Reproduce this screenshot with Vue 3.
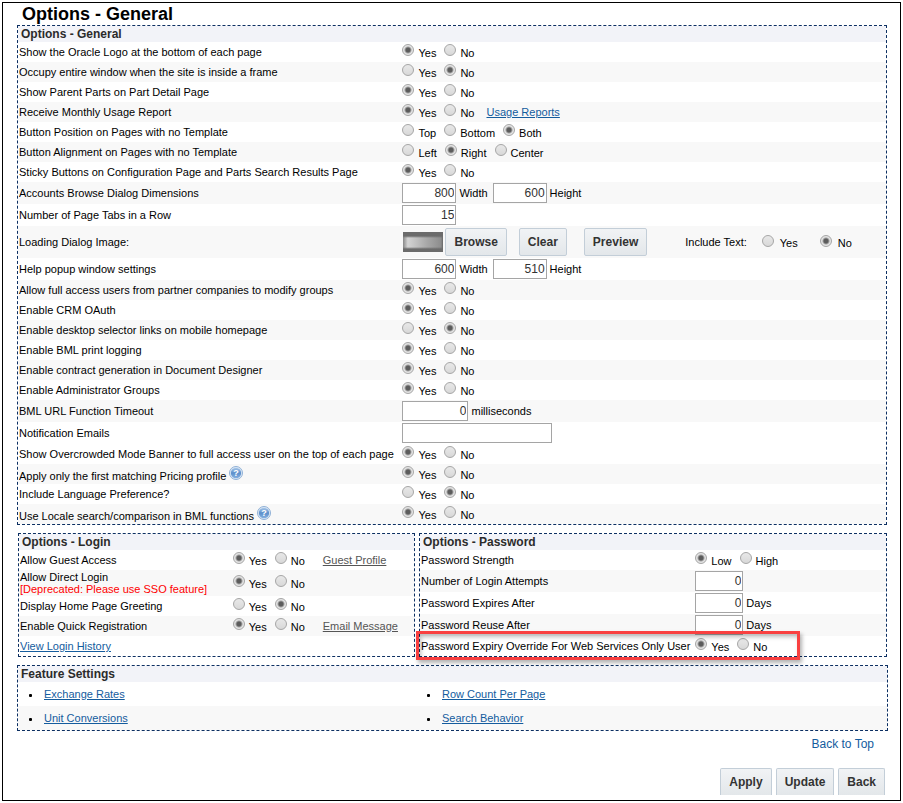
<script setup>
import { reactive } from 'vue'

const choice = (id, label, value, options = ['Yes', 'No'], extra = {}) => ({
  id, label, kind: 'choice', value, options, ...extra,
})
const fields = (id, label, inputs) => ({ id, label, kind: 'fields', inputs })

const panels = reactive([
  {
    id: 'general',
    title: 'Options - General',
    rows: [
      choice('logo', 'Show the Oracle Logo at the bottom of each page', 'Yes'),
      choice('frame', 'Occupy entire window when the site is inside a frame', 'No'),
      choice('parent', 'Show Parent Parts on Part Detail Page', 'Yes'),
      choice('usage', 'Receive Monthly Usage Report', 'Yes', undefined, { link: 'Usage Reports' }),
      choice('position', 'Button Position on Pages with no Template', 'Both', ['Top', 'Bottom', 'Both']),
      choice('alignment', 'Button Alignment on Pages with no Template', 'Right', ['Left', 'Right', 'Center']),
      choice('sticky', 'Sticky Buttons on Configuration Page and Parts Search Results Page', 'Yes'),
      fields('accounts', 'Accounts Browse Dialog Dimensions', [
        { value: '800', unit: 'Width', size: 'medium' },
        { value: '600', unit: 'Height', size: 'medium' },
      ]),
      fields('tabs', 'Number of Page Tabs in a Row', [{ value: '15', size: 'medium' }]),
      { id: 'loading', label: 'Loading Dialog Image:', kind: 'image', value: 'No', options: ['Yes', 'No'] },
      fields('help', 'Help popup window settings', [
        { value: '600', unit: 'Width', size: 'medium' },
        { value: '510', unit: 'Height', size: 'medium' },
      ]),
      choice('partner', 'Allow full access users from partner companies to modify groups', 'Yes'),
      choice('oauth', 'Enable CRM OAuth', 'Yes'),
      choice('desktop', 'Enable desktop selector links on mobile homepage', 'No'),
      choice('print', 'Enable BML print logging', 'Yes'),
      choice('contract', 'Enable contract generation in Document Designer', 'Yes'),
      choice('admin', 'Enable Administrator Groups', 'Yes'),
      fields('timeout', 'BML URL Function Timeout', [{ value: '0', unit: 'milliseconds', size: 'large' }]),
      fields('emails', 'Notification Emails', [{ value: '', size: 'wide' }]),
      choice('banner', 'Show Overcrowded Mode Banner to full access user on the top of each page', 'Yes'),
      choice('pricing', 'Apply only the first matching Pricing profile', 'Yes', undefined, { help: true }),
      choice('language', 'Include Language Preference?', 'No'),
      choice('locale', 'Use Locale search/comparison in BML functions', 'Yes', undefined, { help: true }),
    ],
  },
  {
    id: 'login',
    title: 'Options - Login',
    rows: [
      choice('guest', 'Allow Guest Access', 'Yes', undefined, { link: 'Guest Profile' }),
      choice('direct', 'Allow Direct Login', 'Yes', undefined, { note: '[Deprecated: Please use SSO feature]' }),
      choice('greeting', 'Display Home Page Greeting', 'No'),
      choice('registration', 'Enable Quick Registration', 'Yes', undefined, { link: 'Email Message' }),
      { id: 'history', kind: 'link', link: 'View Login History' },
    ],
  },
  {
    id: 'password',
    title: 'Options - Password',
    rows: [
      choice('strength', 'Password Strength', 'Low', ['Low', 'High']),
      fields('attempts', 'Number of Login Attempts', [{ value: '0', size: 'small' }]),
      fields('expires', 'Password Expires After', [{ value: '0', unit: 'Days', size: 'small' }]),
      fields('reuse', 'Password Reuse After', [{ value: '0', unit: 'Days', size: 'small' }]),
      choice('override', 'Password Expiry Override For Web Services Only User', 'Yes', undefined, { highlight: true }),
    ],
  },
])

const features = ['Exchange Rates', 'Row Count Per Page', 'Unit Conversions', 'Search Behavior']
</script>

<template>
  <main class="page">
    <h1 class="title">Options - General</h1>

    <div class="panels">
      <section v-for="panel in panels" :key="panel.id" class="panel" :class="panel.id">
        <h2 class="panel-title">{{ panel.title }}</h2>
        <div
          v-for="row in panel.rows"
          :key="row.id"
          class="row"
          :class="[row.kind, { highlight: row.highlight }]"
        >
          <a v-if="row.kind === 'link'" href="#" class="link">{{ row.link }}</a>
          <template v-else>
            <div class="label" :class="{ 'with-help': row.help }">
              <label v-if="row.kind === 'fields'" :for="`${row.id}-0`">{{ row.label }}</label>
              <span v-else :id="`${row.id}-label`">{{ row.label }}</span>
              <span v-if="row.note" class="note">{{ row.note }}</span>
              <svg v-if="row.help" class="help-icon" viewBox="0 0 14 14" aria-hidden="true">
                <defs>
                  <linearGradient :id="`${row.id}-ball`" x1="0" y1="0" x2="0" y2="1">
                    <stop offset="0" stop-color="#a9c8ea" />
                    <stop offset="0.5" stop-color="#5c8fcb" />
                    <stop offset="1" stop-color="#86b0e0" />
                  </linearGradient>
                </defs>
                <circle cx="7" cy="7" r="6.5" fill="#dfeaf6" stroke="#8fb0d6" />
                <circle cx="7" cy="7" r="5.2" :fill="`url(#${row.id}-ball)`" />
                <text x="7" y="10.2" text-anchor="middle" font-size="9" font-weight="bold" fill="#fff">?</text>
              </svg>
            </div>

            <div v-if="row.kind === 'choice'" class="controls">
              <div class="options" role="radiogroup" :aria-labelledby="`${row.id}-label`">
                <label v-for="option in row.options" :key="option" class="option">
                  <input v-model="row.value" type="radio" :name="row.id" :value="option" />
                  <span>{{ option }}</span>
                </label>
              </div>
              <a v-if="row.link" href="#" class="link">{{ row.link }}</a>
            </div>

            <div v-else-if="row.kind === 'fields'" class="controls">
              <span v-for="(input, i) in row.inputs" :key="i" class="field">
                <input :id="`${row.id}-${i}`" v-model="input.value" type="text" :class="input.size" :aria-label="`${row.label} ${input.unit || ''}`" />
                <label v-if="input.unit" :for="`${row.id}-${i}`">{{ input.unit }}</label>
              </span>
            </div>

            <div v-else class="controls">
              <span class="thumb"></span>
              <button type="button" class="button browse">Browse</button>
              <button type="button" class="button clear">Clear</button>
              <button type="button" class="button">Preview</button>
              <span id="include-label" class="include">Include Text:</span>
              <div class="options spread" role="radiogroup" aria-labelledby="include-label">
                <label v-for="option in row.options" :key="option" class="option">
                  <input v-model="row.value" type="radio" :name="row.id" :value="option" />
                  <span>{{ option }}</span>
                </label>
              </div>
            </div>
          </template>
        </div>
      </section>
    </div>

    <section class="panel features">
      <h2 class="panel-title">Feature Settings</h2>
      <ul class="feature-list">
        <li v-for="feature in features" :key="feature"><a href="#" class="link">{{ feature }}</a></li>
      </ul>
    </section>

    <footer class="footer">
      <a href="#" class="top-link">Back to Top</a>
      <div class="actions">
        <button type="button" class="button">Apply</button>
        <button type="button" class="button">Update</button>
        <button type="button" class="button">Back</button>
      </div>
    </footer>
  </main>
</template>

<style>
body {
  background: #fff;
}
#app {
  padding: 2px;
}
</style>

<style scoped>
.page {
  border: 1px solid #000;
  padding: 0 12px 5px 14px;
  font: 11px/14px "Liberation Sans", Arial, sans-serif;
  color: #000;
}
.title {
  margin: 0;
  padding-left: 5px;
  font-size: 18px;
  line-height: 22px;
}
.panels {
  display: grid;
  grid-template-columns: 398fr 468fr;
  gap: 8px 4px;
  margin: 0 1px 8px 0;
}
.panel {
  border: 1px dashed #0c2f62;
}
.general {
  grid-column: 1 / -1;
  --label-width: 44%;
}
.login {
  margin-left: 1px;
  --label-width: 54%;
}
.password {
  --label-width: 59%;
}
.panel-title {
  margin: 0;
  padding-left: 3px;
  background: #f2f3f8;
  color: #2b2b2b;
  font-size: 12px;
  line-height: 16px;
}
.row {
  position: relative;
  display: flex;
  align-items: center;
  min-height: 20px;
  padding-left: 1px;
}
.row:nth-child(odd) {
  background: #f8f8f8;
}
/* The banner row restarts the striping of the general panel. */
.general .row:nth-child(n + 21):nth-child(odd) {
  background: #fff;
}
.general .row:nth-child(n + 21):nth-child(even) {
  background: #f8f8f8;
}
.row.fields {
  min-height: 22px;
}
.row.image {
  min-height: 32px;
}
.label {
  flex: 0 0 var(--label-width);
  line-height: 12px;
}
.note {
  display: block;
  color: #f00;
}
.row:has(.note) {
  min-height: 26px;
}
.with-help {
  display: flex;
  align-items: flex-end;
  gap: 3px;
}
.help-icon {
  width: 14px;
  height: 14px;
  margin-bottom: 2px;
}
.controls {
  display: flex;
  align-items: center;
  gap: 5px;
  white-space: nowrap;
}
.general .controls {
  padding-left: 2px;
}
.options {
  display: flex;
  gap: 8px;
}
.option {
  display: flex;
  align-items: flex-start;
  gap: 4px;
}
.option span {
  padding-top: 2px;
}
input[type="radio"] {
  appearance: none;
  box-sizing: border-box;
  width: 12px;
  height: 12px;
  margin: 0;
  border: 1px solid #a6a6a6;
  border-radius: 50%;
  background: linear-gradient(#e8e8e8, #d8d8d8);
}
input[type="radio"]:checked {
  background: radial-gradient(circle, #5c5c5c 0 2px, #5c5c5c 2px, #e4e4e4 4px);
}
.field {
  display: flex;
  align-items: center;
  gap: 3px;
}
input[type="text"] {
  box-sizing: border-box;
  height: 20px;
  margin: 0;
  border: 1px solid #a5a5a5;
  padding: 0 1px;
  background: #fff;
  color: #333;
  font: 12px "Liberation Sans", Arial, sans-serif;
  text-align: right;
}
.small {
  width: 48px;
}
.medium {
  width: 54px;
}
.large {
  width: 66px;
}
.wide {
  width: 150px;
}
.link {
  color: #145c9e;
  text-decoration: underline;
  text-underline-offset: 1px;
}
.choice .link {
  margin-left: 7px;
}
.login .choice .link {
  margin-left: 13px;
  color: #555;
}
.image .controls {
  gap: 0;
}
.thumb {
  width: 40px;
  height: 20px;
  margin: 0 2px 0 1px;
  background:
    linear-gradient(#6b6b6b 0 4px, transparent 6px 15px, #6b6b6b 17px),
    linear-gradient(90deg, #888, #d4d4d4 12%, #a8a8a8 60%, #8d8d8d 95%, #666);
}
.button {
  height: 28px;
  margin: 0;
  border: 1px solid #c3ced8;
  border-radius: 2px;
  padding: 0 8px;
  background: linear-gradient(#f1f3f5, #e3e7ea);
  color: #333;
  font: bold 12px "Liberation Sans", Arial, sans-serif;
}
.browse {
  margin-right: 12px;
}
.clear {
  margin-right: 17px;
}
.include {
  margin: 0 15px 0 38px;
}
.spread {
  gap: 22px;
}
.spread .option {
  gap: 6px;
}
.spread .option input {
  margin-top: 1px;
}
.highlight::after {
  content: "";
  position: absolute;
  inset: -5px 86px -4px -4px;
  border: 3px solid #f94040;
  box-shadow: 2px 3px 4px rgba(0, 0, 0, 0.3), inset 2px 3px 4px rgba(0, 0, 0, 0.25);
  pointer-events: none;
}
.feature-list {
  display: grid;
  grid-template-columns: 398fr 471fr;
  margin: 0;
  padding: 0;
  list-style: none;
}
.feature-list li {
  display: flex;
  align-items: center;
  gap: 12px;
  height: 24px;
  padding-left: 11px;
}
.feature-list li::before {
  content: "";
  width: 3px;
  height: 3px;
  margin-top: 2px;
  border-radius: 1px;
  background: #000;
}
.feature-list li:nth-child(n + 3) {
  background: #f8f8f8;
}
.footer {
  display: flex;
  flex-direction: column;
  align-items: flex-end;
  gap: 16px;
  padding-top: 5px;
}
.top-link {
  margin-right: 14px;
  color: #145c9e;
  font-size: 12px;
  line-height: 16px;
  text-decoration: none;
}
.actions {
  display: flex;
  gap: 4px;
  margin-right: 3px;
}
.actions .button {
  height: 27px;
  border-bottom: 0;
  border-radius: 2px 2px 0 0;
}
</style>
